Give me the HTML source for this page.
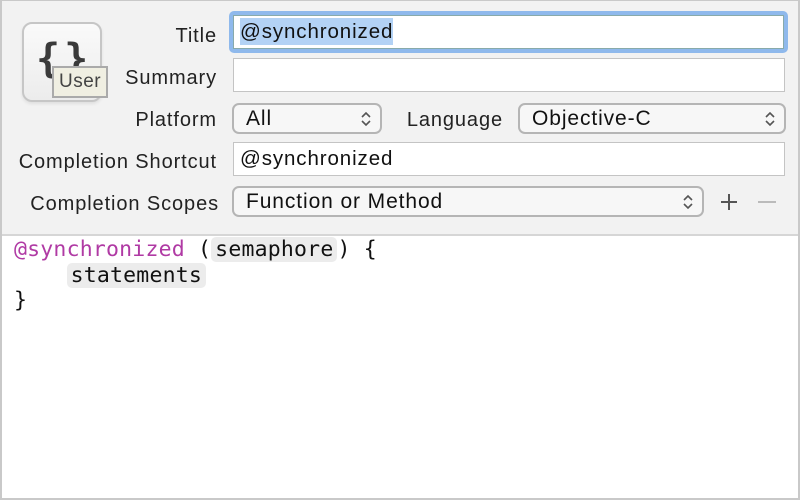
<!DOCTYPE html>
<html><head><style>
*{margin:0;padding:0;box-sizing:border-box}
body{width:800px;height:500px;background:#fff;font-family:"Liberation Sans",sans-serif;position:relative;overflow:hidden;letter-spacing:0.9px}
.frame{position:absolute;left:0;top:0;width:800px;height:500px;border:2px solid #c9c9c9;border-top:1px solid #c9c9c9}
.top{position:absolute;left:2px;top:1px;width:796px;height:235px;background:#f2f2f2;border-bottom:2px solid #d6d6d6}
.lbl{position:absolute;font-size:20px;color:#222;text-align:right;width:210px;line-height:24px}
.field{position:absolute;background:#fff;border:1px solid #c4c4c4;font-size:20.5px;color:#111;padding-left:6px;line-height:32px}
.pop{position:absolute;border:2px solid #b5b5b5;border-radius:7px;background:#f7f7f7;font-size:21px;color:#111;padding-left:12px;line-height:27px}
.arr{position:absolute;right:8px;top:4px;width:12px;height:20px}
.code{position:absolute;left:14px;font-family:"DejaVu Sans Mono",monospace;font-size:21.5px;color:#111;white-space:pre;letter-spacing:0.2px}
.tok{background:#ececec;border-radius:5px;padding:0 4px}
</style></head><body>
<div class="top"></div>
<div class="frame"></div>
<div style="position:absolute;left:22px;top:22px;width:80px;height:80px;border:2px solid #c6c6c6;border-radius:10px;background:linear-gradient(#fafafa,#ececec);box-shadow:0 2px 3px rgba(0,0,0,.08)"></div>
<div style="position:absolute;left:36px;top:36px;font-family:'DejaVu Sans Mono',monospace;font-weight:bold;font-size:40px;color:#3a3a3a;letter-spacing:4px">{}</div>
<div style="position:absolute;left:52px;top:66px;width:56px;height:32px;background:#f0efe2;border:2px solid #aaa;font-size:19px;color:#444;padding-left:5px;line-height:28px;letter-spacing:0.5px">User</div>

<div class="lbl" style="left:7px;top:24px">Title</div>
<div style="position:absolute;left:229px;top:11px;width:559px;height:42px;border:4px solid #8fb9ec;border-radius:5px"></div>
<div class="field" style="left:233px;top:15px;width:551px;height:34px;border-color:#8aa"><span style="background:#b3d2f5;padding:2px 0">@synchronized</span></div>
<div class="lbl" style="left:7px;top:66px">Summary</div>
<div class="field" style="left:233px;top:58px;width:552px;height:34px"></div>
<div class="lbl" style="left:7px;top:108px">Platform</div>
<div class="pop" style="left:232px;top:103px;width:150px;height:31px">All<svg class="arr" viewBox="0 0 12 20"><path d="M2 8 6 4 10 8M2 12 6 16 10 12" fill="none" stroke="#555" stroke-width="1.6"/></svg></div>
<div class="lbl" style="left:293px;top:108px">Language</div>
<div class="pop" style="left:518px;top:103px;width:268px;height:31px">Objective-C<svg class="arr" viewBox="0 0 12 20"><path d="M2 8 6 4 10 8M2 12 6 16 10 12" fill="none" stroke="#555" stroke-width="1.6"/></svg></div>
<div class="lbl" style="left:7px;top:150px">Completion Shortcut</div>
<div class="field" style="left:233px;top:142px;width:552px;height:34px">@synchronized</div>
<div class="lbl" style="left:9px;top:192px">Completion Scopes</div>
<div class="pop" style="left:232px;top:186px;width:472px;height:31px">Function or Method<svg class="arr" viewBox="0 0 12 20"><path d="M2 8 6 4 10 8M2 12 6 16 10 12" fill="none" stroke="#555" stroke-width="1.6"/></svg></div>
<svg style="position:absolute;left:719px;top:192px" width="20" height="20"><path d="M10 2V18M2 10H18" stroke="#555" stroke-width="2"/></svg>
<svg style="position:absolute;left:757px;top:192px" width="20" height="20"><path d="M1 10H19" stroke="#bbb" stroke-width="2"/></svg>

<div class="code" style="top:237px"><span style="color:#b03aa4">@synchronized</span> (<span class="tok">semaphore</span>) {</div>
<div class="code" style="top:263px">    <span class="tok">statements</span></div>
<div class="code" style="top:288px">}</div>
</body></html>
